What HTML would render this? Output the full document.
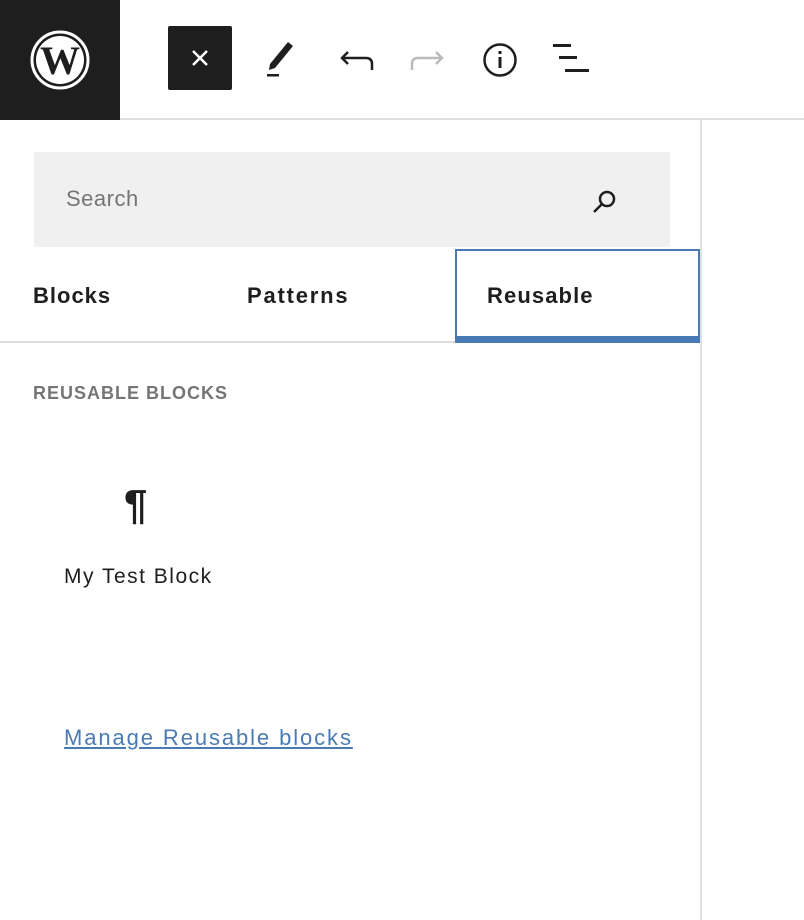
<!DOCTYPE html>
<html><head><style>
*{margin:0;padding:0;box-sizing:border-box}
body{width:804px;height:920px;background:#fff;font-family:"Liberation Sans",sans-serif;position:relative;overflow:hidden;color:#1e1e1e}
.abs{position:absolute}
</style></head><body>
<div class="abs" style="left:0;top:0;width:120px;height:120px;background:#1e1e1e"></div>
<svg class="abs" style="left:28px;top:28px" width="64" height="64" viewBox="0 0 64 64">
<circle cx="32" cy="32" r="28" fill="none" stroke="#fff" stroke-width="3"/>
<circle cx="32" cy="32" r="24" fill="#fff"/>
<text x="32" y="46" text-anchor="middle" font-family="Liberation Serif" font-weight="bold" font-size="40" fill="#1e1e1e">W</text>
</svg>
<div class="abs" style="left:120px;top:118px;width:684px;height:2px;background:#e0e0e0"></div>
<div class="abs" style="left:168px;top:26px;width:64px;height:64px;background:#1e1e1e;border-radius:2px"></div>
<svg class="abs" style="left:168px;top:26px" width="64" height="64"><path d="M25 25 L39 39 M39 25 L25 39" stroke="#fff" stroke-width="2.5"/></svg>
<svg class="abs" style="left:260px;top:36px" width="48" height="44" viewBox="0 0 48 44">
<path d="M10 28 L28 6 L33 10 L15 32 L9 34 Z" fill="#1e1e1e"/><rect x="7" y="38" width="12" height="2.5" fill="#1e1e1e"/></svg>
<svg class="abs" style="left:336px;top:40px" width="40" height="40" viewBox="0 0 40 40">
<path d="M12 12 L6 18 L12 24 M6 18 H30 Q36 18 36 24 V30" fill="none" stroke="#1e1e1e" stroke-width="2.5"/></svg>
<svg class="abs" style="left:408px;top:40px" width="40" height="40" viewBox="0 0 40 40">
<path d="M28 12 L34 18 L28 24 M34 18 H10 Q4 18 4 24 V30" fill="none" stroke="#bbb" stroke-width="2.5"/></svg>
<svg class="abs" style="left:480px;top:40px" width="40" height="40" viewBox="0 0 40 40">
<circle cx="20" cy="20" r="15.5" fill="none" stroke="#1e1e1e" stroke-width="2.5"/>
<rect x="18.5" y="17" width="3" height="11" fill="#1e1e1e"/><rect x="18.5" y="11" width="3" height="3" fill="#1e1e1e"/></svg>
<div class="abs" style="left:553px;top:44px;width:18px;height:2.5px;background:#1e1e1e"></div>
<div class="abs" style="left:559px;top:56px;width:18px;height:2.5px;background:#1e1e1e"></div>
<div class="abs" style="left:565px;top:69px;width:24px;height:2.5px;background:#1e1e1e"></div>
<div class="abs" style="left:700px;top:120px;width:2px;height:800px;background:#e0e0e0"></div>
<div class="abs" style="left:34px;top:152px;width:636px;height:95px;background:#f0f0f0;border-radius:2px"></div>
<div class="abs" style="left:66px;top:186px;font-size:22px;color:#757575;letter-spacing:0.5px">Search</div>
<svg class="abs" style="left:588px;top:184px" width="34" height="34" viewBox="0 0 34 34">
<circle cx="19" cy="15" r="7" fill="none" stroke="#1e1e1e" stroke-width="2.5"/><path d="M14 20 L6 28" stroke="#1e1e1e" stroke-width="2.5"/></svg>
<div class="abs" style="left:0;top:341px;width:700px;height:2px;background:#ddd"></div>
<div class="abs" style="left:455px;top:249px;width:245px;height:94px;border:2px solid #4a7ab5;border-bottom:7px solid #4a7ab5"></div>
<div class="abs" style="left:33px;top:283px;font-size:22px;font-weight:bold;color:#1e1e1e;letter-spacing:1px">Blocks</div>
<div class="abs" style="left:247px;top:283px;font-size:22px;font-weight:bold;color:#1e1e1e;letter-spacing:1.8px">Patterns</div>
<div class="abs" style="left:487px;top:283px;font-size:22px;font-weight:bold;color:#1e1e1e;letter-spacing:1.1px">Reusable</div>
<div class="abs" style="left:33px;top:383px;font-size:18px;font-weight:bold;color:#757575;letter-spacing:1px">REUSABLE BLOCKS</div>
<div class="abs" style="left:124px;top:481px;font-size:42px;font-weight:bold;color:#1e1e1e">¶</div>
<div class="abs" style="left:64px;top:565px;font-size:21px;color:#1e1e1e;letter-spacing:1.5px">My Test Block</div>
<div class="abs" style="left:64px;top:725px;font-size:22px;color:#4a7ab5;text-decoration:underline;letter-spacing:1.9px">Manage Reusable blocks</div>
</body></html>
